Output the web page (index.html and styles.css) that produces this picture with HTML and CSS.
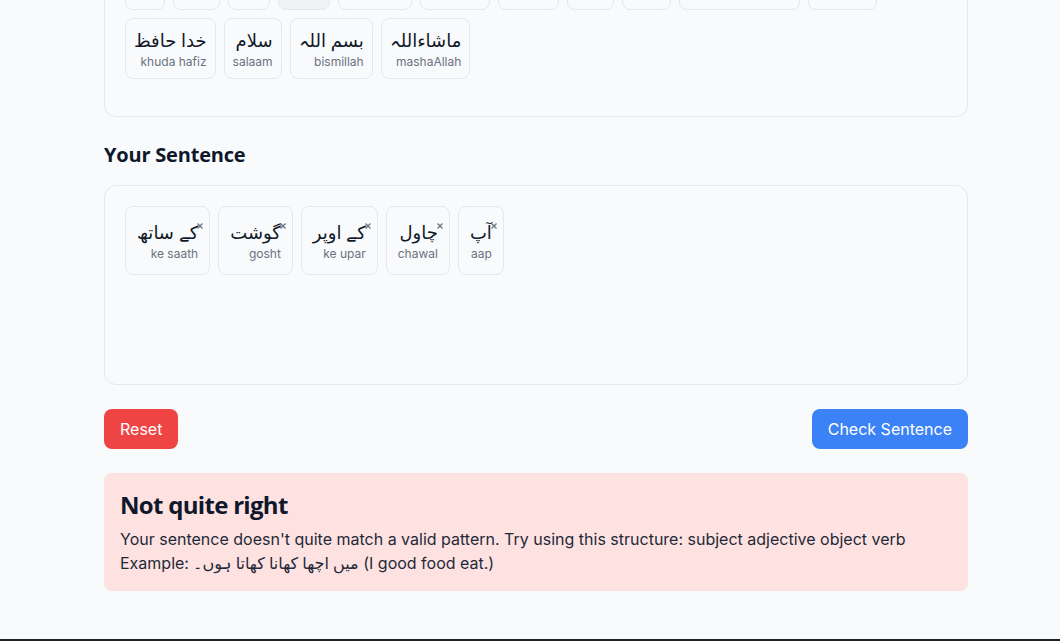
FILE: index.html
```html
<!DOCTYPE html>
<html lang="en">
<head>
<meta charset="utf-8">
<title>Urdu Sentence Builder</title>
<link rel="stylesheet" href="styles.css">
</head>
<body>
<main class="page">
  <section class="card bank">
    <div class="tiles">
      <button class="tile"><span class="ur">آپ</span><span class="ro">aap</span></button>
      <button class="tile"><span class="ur">میں</span><span class="ro">main</span></button>
      <button class="tile"><span class="ur">وہ</span><span class="ro">woh</span></button>
      <button class="tile used"><span class="ur">کھانا</span><span class="ro">khana</span></button>
      <button class="tile"><span class="ur">مزیدار</span><span class="ro">mazedaar</span></button>
      <button class="tile"><span class="ur">کے اندر</span><span class="ro">ke andar</span></button>
      <button class="tile"><span class="ur">دیکھتا</span><span class="ro">dekhta</span></button>
      <button class="tile"><span class="ur">اچھا</span><span class="ro">acha</span></button>
      <button class="tile"><span class="ur">پانی</span><span class="ro">paani</span></button>
      <button class="tile"><span class="ur">آپ کیسے ہیں</span><span class="ro">aap kaise hain</span></button>
      <button class="tile"><span class="ur">شکریہ</span><span class="ro">shukriya</span></button>
      <button class="tile"><span class="ur">خدا حافظ</span><span class="ro">khuda hafiz</span></button>
      <button class="tile"><span class="ur">سلام</span><span class="ro">salaam</span></button>
      <button class="tile"><span class="ur">بسم اللہ</span><span class="ro">bismillah</span></button>
      <button class="tile"><span class="ur">ماشاءاللہ</span><span class="ro">mashaAllah</span></button>
    </div>
  </section>

  <h2 class="section-title">Your Sentence</h2>

  <section class="card sentence">
    <div class="tiles">
      <div class="tile big"><span class="ur">کے ساتھ</span><span class="ro">ke saath</span><svg class="x" viewBox="0 0 6 6"><path d="M0.5 0.5L5.5 5.5M5.5 0.5L0.5 5.5"/></svg></div>
      <div class="tile big"><span class="ur">گوشت</span><span class="ro">gosht</span><svg class="x" viewBox="0 0 6 6"><path d="M0.5 0.5L5.5 5.5M5.5 0.5L0.5 5.5"/></svg></div>
      <div class="tile big"><span class="ur">کے اوپر</span><span class="ro">ke upar</span><svg class="x" viewBox="0 0 6 6"><path d="M0.5 0.5L5.5 5.5M5.5 0.5L0.5 5.5"/></svg></div>
      <div class="tile big"><span class="ur">چاول</span><span class="ro">chawal</span><svg class="x" viewBox="0 0 6 6"><path d="M0.5 0.5L5.5 5.5M5.5 0.5L0.5 5.5"/></svg></div>
      <div class="tile big"><span class="ur">آپ</span><span class="ro">aap</span><svg class="x" viewBox="0 0 6 6"><path d="M0.5 0.5L5.5 5.5M5.5 0.5L0.5 5.5"/></svg></div>
    </div>
  </section>

  <div class="actions">
    <button class="btn reset">Reset</button>
    <button class="btn check">Check Sentence</button>
  </div>

  <section class="feedback">
    <h3 class="fb-title">Not quite right</h3>
    <p class="fb-text">Your sentence doesn't quite match a valid pattern. Try using this structure: subject adjective object verb</p>
    <p class="fb-text">Example: <span class="ur-inline">میں اچھا کھانا کھاتا ہوں۔</span> (I good food eat.)</p>
  </section>
</main>
<footer class="footer"></footer>
</body>
</html>
```

FILE: styles.css
```css
* { box-sizing: border-box; }

html, body {
  margin: 0;
  padding: 0;
  background: #f8fafc;
  font-family: Inter, "Noto Sans", sans-serif;
  color: #111827;
}

.page {
  width: 864px;
  margin: 0 92px 0 104px;
}

.card {
  border: 1px solid #e2e8f0;
  border-radius: 12px;
  background: #f8fafc;
  padding: 20px;
}

.bank {
  margin-top: -72px;
  padding-bottom: 37px;
}

.tiles {
  display: flex;
  flex-wrap: wrap;
  gap: 8px;
  align-items: flex-start;
}

.tile {
  position: relative;
  display: flex;
  flex-direction: column;
  align-items: flex-end;
  border: 1px solid #e5e7eb;
  border-radius: 8px;
  background: transparent;
  padding: 8px;
  margin: 0;
  font: inherit;
  color: inherit;
}

.tile.used {
  background: #f1f2f4;
}

.tile.big {
  padding: 12px 11px;
}

.ur {
  font-size: 18px;
  line-height: 27px;
  color: #111827;
  font-family: "Noto Sans", "DejaVu Sans", sans-serif;
}

.ro {
  font-size: 12px;
  line-height: 16px;
  color: #6b7280;
}

.x {
  position: absolute;
  top: 16px;
  right: 6px;
  width: 6px;
  height: 6px;
  fill: none;
  stroke: #6b7280;
  stroke-width: 1.3;
}

.section-title {
  margin: 24px 0 16px;
  font-family: "Open Sans", sans-serif;
  font-weight: 700;
  font-size: 20px;
  line-height: 28px;
  color: #0f172a;
  letter-spacing: -0.2px;
}

.sentence {
  min-height: 200px;
}

.actions {
  display: flex;
  justify-content: space-between;
  margin-top: 24px;
}

.btn {
  height: 40px;
  padding: 0 16px;
  border: none;
  border-radius: 8px;
  color: #fff;
  font-family: Inter, sans-serif;
  font-size: 16px;
  font-weight: 400;
}

.reset { background: #ef4444; }
.check { background: #3b82f6; }

.feedback {
  margin-top: 24px;
  background: #fee2e2;
  border-radius: 8px;
  padding: 16px;
}

.fb-title {
  margin: 0 0 6px;
  font-family: "Open Sans", sans-serif;
  font-weight: 700;
  font-size: 24px;
  line-height: 32px;
  color: #0f172a;
  letter-spacing: -0.7px;
}

.fb-text {
  margin: 0;
  font-size: 16px;
  line-height: 24px;
  color: #1f2937;
}

.ur-inline {
  font-family: "Noto Sans", "DejaVu Sans", sans-serif;
}

.footer {
  margin-top: 48px;
  height: 40px;
  background: #222125;
}
```
